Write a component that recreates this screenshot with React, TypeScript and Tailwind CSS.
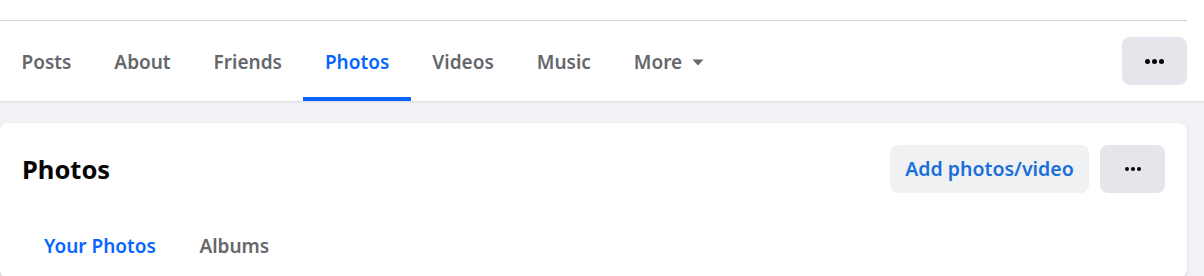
import React from 'react'

const TABS = ['Posts', 'About', 'Friends', 'Photos', 'Videos', 'Music']

function Dots({ size = 5, gap = 2 }: { size?: number; gap?: number }) {
  const w = size * 3 + gap * 2
  const r = size / 2
  return (
    <svg width={w} height={size} viewBox={`0 0 ${w} ${size}`} fill="#050505">
      <circle cx={r} cy={r} r={r} />
      <circle cx={r + size + gap} cy={r} r={r} />
      <circle cx={r + (size + gap) * 2} cy={r} r={r} />
    </svg>
  )
}

export default function App() {
  return (
    <div className="w-[1204px] h-[276px] overflow-hidden bg-[#f0f2f5] font-['Noto_Sans','Open_Sans',sans-serif]">
      {/* Profile tab header */}
      <div className="bg-white shadow-[0_1px_2px_rgba(0,0,0,0.1)]">
        <div className="w-[1187px] pt-[20px]">
          <div className="h-px bg-[#ced0d4]" />
          <div className="flex h-[80px] items-stretch">
            {TABS.map((tab) => {
              const active = tab === 'Photos'
              return (
                <div
                  key={tab}
                  className={
                    active
                      ? 'flex items-center px-[21.5px] pt-[6px] border-b-4 border-b-[#0866ff] text-[#0866ff] text-[19px] font-semibold'
                      : 'flex items-center px-[21.5px] pt-[6px] border-b-4 border-transparent text-[#65676b] text-[19px] font-semibold'
                  }
                >
                  {tab}
                </div>
              )
            })}
            <div className="flex items-center gap-[10px] px-[21.5px] pt-[6px] border-b-4 border-transparent text-[#65676b] text-[19px] font-semibold">
              More
              <svg width="12" height="7" viewBox="0 0 12 7" fill="#65676b">
                <path d="M0.5 0.5 H11.5 L6 6.5 Z" />
              </svg>
            </div>
            <div className="ml-auto flex items-center">
              <button className="flex h-[48px] w-[65px] items-center justify-center rounded-[8px] bg-[#e4e6eb]">
                <Dots size={5} gap={2} />
              </button>
            </div>
          </div>
        </div>
      </div>

      {/* Photos card */}
      <div className="mt-[22px] w-[1187px] rounded-[8px] bg-white shadow-[0_1px_2px_rgba(0,0,0,0.2)] px-[22px] pt-[22px]">
        <div className="flex items-center justify-between">
          <h2 className="text-[25.5px] font-bold text-[#050505]">Photos</h2>
          <div className="flex gap-[11px]">
            <button className="h-[48px] w-[199px] rounded-[8px] bg-[#f0f1f3] text-[19.5px] font-semibold text-[#1b6fd9]">
              Add photos/video
            </button>
            <button className="flex h-[48px] w-[65px] items-center justify-center rounded-[8px] bg-[#e4e6eb]">
              <Dots size={4} gap={2} />
            </button>
          </div>
        </div>
        <div className="mt-[21px] flex h-[64px]">
          <div className="flex items-center px-[22px] text-[19px] font-semibold text-[#0866ff]">Your Photos</div>
          <div className="flex items-center px-[21.5px] text-[19px] font-semibold text-[#65676b]">Albums</div>
        </div>
      </div>
    </div>
  )
}
